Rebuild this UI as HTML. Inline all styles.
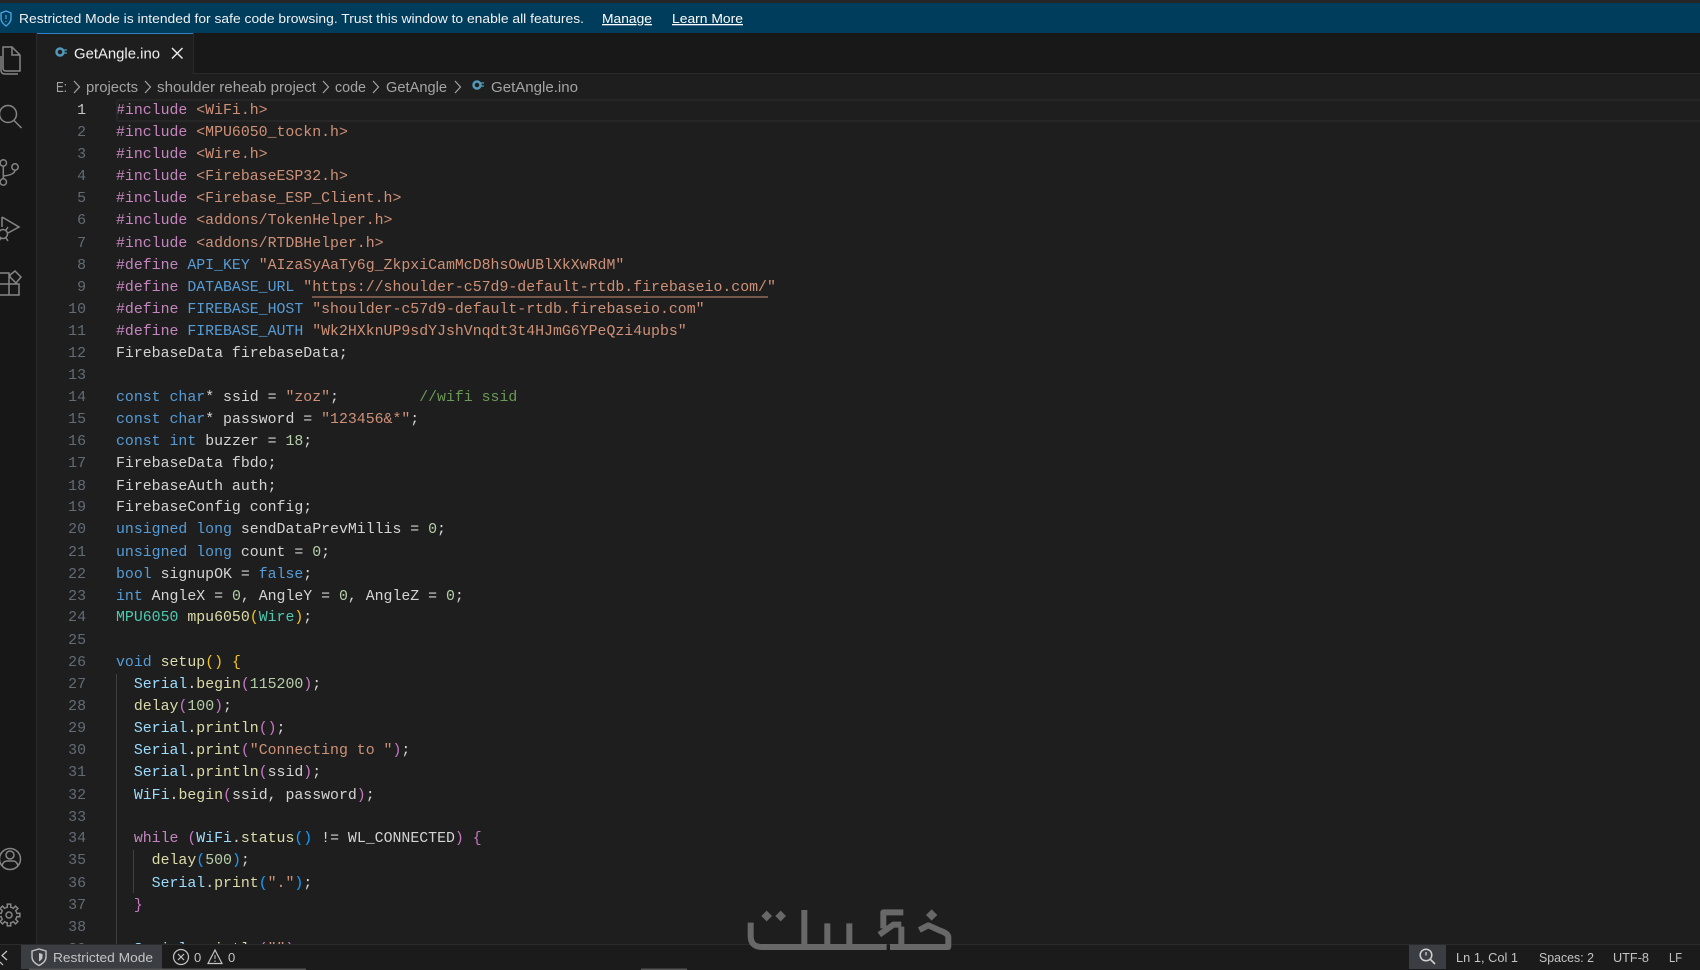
<!DOCTYPE html>
<html lang="en"><head><meta charset="utf-8"><title>GetAngle.ino</title>
<style>
html,body{margin:0;padding:0;width:1700px;height:970px;overflow:hidden;background:#1e1e1e}
#ed{position:absolute;left:0;top:97px;width:1700px;height:847px;overflow:hidden}
.l,.n{position:absolute;height:22px;line-height:22px;font:14.87px/22px "Liberation Mono",monospace;white-space:pre}
.l{left:116px;color:#d4d4d4}
.n{left:50px;width:36px;text-align:right;color:#626c76}
.p{color:#c586c0}.s{color:#ce9178}.b{color:#569cd6}.v{color:#9cdcfe}.f{color:#dcdcaa}.d{color:#b5cea8}.c{color:#6a9955}.t{color:#4ec9b0}.g{color:#f5c518}.m{color:#c678c6}.u{color:#179fff}
svg{position:absolute;left:0;top:0}
text{font-family:"Liberation Sans",sans-serif}
</style></head><body>
<div id="ed">
<div class="n" style="top:3px;color:#c6c6c6">1</div><div class="l" style="top:3px"><span class="p">#include</span> <span class="s">&lt;WiFi.h&gt;</span></div>
<div class="n" style="top:25px">2</div><div class="l" style="top:25px"><span class="p">#include</span> <span class="s">&lt;MPU6050_tockn.h&gt;</span></div>
<div class="n" style="top:47px">3</div><div class="l" style="top:47px"><span class="p">#include</span> <span class="s">&lt;Wire.h&gt;</span></div>
<div class="n" style="top:69px">4</div><div class="l" style="top:69px"><span class="p">#include</span> <span class="s">&lt;FirebaseESP32.h&gt;</span></div>
<div class="n" style="top:91px">5</div><div class="l" style="top:91px"><span class="p">#include</span> <span class="s">&lt;Firebase_ESP_Client.h&gt;</span></div>
<div class="n" style="top:113px">6</div><div class="l" style="top:113px"><span class="p">#include</span> <span class="s">&lt;addons/TokenHelper.h&gt;</span></div>
<div class="n" style="top:136px">7</div><div class="l" style="top:136px"><span class="p">#include</span> <span class="s">&lt;addons/RTDBHelper.h&gt;</span></div>
<div class="n" style="top:158px">8</div><div class="l" style="top:158px"><span class="p">#define</span> <span class="b">API_KEY</span> <span class="s">"AIzaSyAaTy6g_ZkpxiCamMcD8hsOwUBlXkXwRdM"</span></div>
<div class="n" style="top:180px">9</div><div class="l" style="top:180px"><span class="p">#define</span> <span class="b">DATABASE_URL</span> <span class="s">"https://shoulder-c57d9-default-rtdb.firebaseio.com/"</span></div>
<div class="n" style="top:202px">10</div><div class="l" style="top:202px"><span class="p">#define</span> <span class="b">FIREBASE_HOST</span> <span class="s">"shoulder-c57d9-default-rtdb.firebaseio.com"</span></div>
<div class="n" style="top:224px">11</div><div class="l" style="top:224px"><span class="p">#define</span> <span class="b">FIREBASE_AUTH</span> <span class="s">"Wk2HXknUP9sdYJshVnqdt3t4HJmG6YPeQzi4upbs"</span></div>
<div class="n" style="top:246px">12</div><div class="l" style="top:246px">FirebaseData firebaseData;</div>
<div class="n" style="top:268px">13</div>
<div class="n" style="top:290px">14</div><div class="l" style="top:290px"><span class="b">const</span> <span class="b">char</span>* ssid = <span class="s">"zoz"</span>;         <span class="c">//wifi ssid</span></div>
<div class="n" style="top:312px">15</div><div class="l" style="top:312px"><span class="b">const</span> <span class="b">char</span>* password = <span class="s">"123456&amp;*"</span>;</div>
<div class="n" style="top:334px">16</div><div class="l" style="top:334px"><span class="b">const</span> <span class="b">int</span> buzzer = <span class="d">18</span>;</div>
<div class="n" style="top:356px">17</div><div class="l" style="top:356px">FirebaseData fbdo;</div>
<div class="n" style="top:379px">18</div><div class="l" style="top:379px">FirebaseAuth auth;</div>
<div class="n" style="top:400px">19</div><div class="l" style="top:400px">FirebaseConfig config;</div>
<div class="n" style="top:422px">20</div><div class="l" style="top:422px"><span class="b">unsigned</span> <span class="b">long</span> sendDataPrevMillis = <span class="d">0</span>;</div>
<div class="n" style="top:445px">21</div><div class="l" style="top:445px"><span class="b">unsigned</span> <span class="b">long</span> count = <span class="d">0</span>;</div>
<div class="n" style="top:467px">22</div><div class="l" style="top:467px"><span class="b">bool</span> signupOK = <span class="b">false</span>;</div>
<div class="n" style="top:489px">23</div><div class="l" style="top:489px"><span class="b">int</span> AngleX = <span class="d">0</span>, AngleY = <span class="d">0</span>, AngleZ = <span class="d">0</span>;</div>
<div class="n" style="top:510px">24</div><div class="l" style="top:510px"><span class="t">MPU6050</span> <span class="f">mpu6050</span><span class="g">(</span><span class="t">Wire</span><span class="g">)</span>;</div>
<div class="n" style="top:533px">25</div>
<div class="n" style="top:555px">26</div><div class="l" style="top:555px"><span class="b">void</span> <span class="f">setup</span><span class="g">()</span> <span class="g">{</span></div>
<div class="n" style="top:577px">27</div><div class="l" style="top:577px">  <span class="v">Serial</span>.<span class="f">begin</span><span class="m">(</span><span class="d">115200</span><span class="m">)</span>;</div>
<div class="n" style="top:599px">28</div><div class="l" style="top:599px">  <span class="f">delay</span><span class="m">(</span><span class="d">100</span><span class="m">)</span>;</div>
<div class="n" style="top:621px">29</div><div class="l" style="top:621px">  <span class="v">Serial</span>.<span class="f">println</span><span class="m">()</span>;</div>
<div class="n" style="top:643px">30</div><div class="l" style="top:643px">  <span class="v">Serial</span>.<span class="f">print</span><span class="m">(</span><span class="s">"Connecting to "</span><span class="m">)</span>;</div>
<div class="n" style="top:665px">31</div><div class="l" style="top:665px">  <span class="v">Serial</span>.<span class="f">println</span><span class="m">(</span>ssid<span class="m">)</span>;</div>
<div class="n" style="top:688px">32</div><div class="l" style="top:688px">  <span class="v">WiFi</span>.<span class="f">begin</span><span class="m">(</span>ssid, password<span class="m">)</span>;</div>
<div class="n" style="top:710px">33</div>
<div class="n" style="top:731px">34</div><div class="l" style="top:731px">  <span class="p">while</span> <span class="m">(</span><span class="v">WiFi</span>.<span class="f">status</span><span class="u">()</span> != WL_CONNECTED<span class="m">)</span> <span class="m">{</span></div>
<div class="n" style="top:753px">35</div><div class="l" style="top:753px">    <span class="f">delay</span><span class="u">(</span><span class="d">500</span><span class="u">)</span>;</div>
<div class="n" style="top:776px">36</div><div class="l" style="top:776px">    <span class="v">Serial</span>.<span class="f">print</span><span class="u">(</span><span class="s">"."</span><span class="u">)</span>;</div>
<div class="n" style="top:798px">37</div><div class="l" style="top:798px">  <span class="m">}</span></div>
<div class="n" style="top:820px">38</div>
<div class="n" style="top:842px">39</div><div class="l" style="top:842px">  <span class="v">Serial</span>.<span class="f">println</span><span class="m">(</span><span class="s">""</span><span class="m">)</span>;</div>
</div>
<svg width="1700" height="970" viewBox="0 0 1700 970" fill="none">
<!-- banner -->
<rect x="0" y="0" width="1700" height="3" fill="#262626"/>
<rect x="0" y="3" width="1700" height="30" fill="#003c5c"/>
<path d="M1 13l5-2 5 2v5c0 4-2.500 6-5 8-2.500-2-5-4-5-8z" stroke="#4aa3df" stroke-width="1.400"/>
<path d="M6 15v4M6 21v1" stroke="#4aa3df" stroke-width="1.200"/>
<text x="19" y="23" font-size="13" fill="#f2f2f2" textLength="565" lengthAdjust="spacingAndGlyphs">Restricted Mode is intended for safe code browsing. Trust this window to enable all features.</text>
<text x="602" y="23" font-size="13" fill="#fff" textLength="50" lengthAdjust="spacingAndGlyphs" text-decoration="underline">Manage</text>
<text x="672" y="23" font-size="13" fill="#fff" textLength="71" lengthAdjust="spacingAndGlyphs" text-decoration="underline">Learn More</text>
<!-- tab bar -->
<rect x="37" y="33" width="1663" height="40" fill="#181818"/>
<rect x="37" y="73" width="1663" height="1" fill="#2a2a2a"/>
<rect x="37" y="33" width="156" height="41" fill="#1e1e1e"/>
<rect x="37" y="33" width="156" height="1" fill="#2f82c4"/>
<rect x="193" y="33" width="1" height="41" fill="#2a2a2a"/>
<circle cx="60" cy="52" r="3.500" stroke="#519aba" stroke-width="2.500"/>
<path d="M64 50h3M64 53h3" stroke="#519aba" stroke-width="1.200"/>
<text x="74" y="58.500" font-size="15" fill="#f0f0f0" textLength="86" lengthAdjust="spacingAndGlyphs">GetAngle.ino</text>
<path d="M172 48l10.500 10.500M182.500 48l-10.500 10.500" stroke="#e8e8e8" stroke-width="1.500"/>
<!-- breadcrumb -->
<g font-size="15" fill="#a4a4a4">
<text x="56" y="92" textLength="11" lengthAdjust="spacingAndGlyphs">E:</text>
<text x="86" y="92" textLength="52" lengthAdjust="spacingAndGlyphs">projects</text>
<text x="157" y="92" textLength="159" lengthAdjust="spacingAndGlyphs">shoulder reheab project</text>
<text x="335" y="92" textLength="31" lengthAdjust="spacingAndGlyphs">code</text>
<text x="386" y="92" textLength="61" lengthAdjust="spacingAndGlyphs">GetAngle</text>
<text x="491" y="92" textLength="87" lengthAdjust="spacingAndGlyphs">GetAngle.ino</text>
</g>
<g stroke="#a4a4a4" stroke-width="1.200">
<path d="M74 81l5.500 6-5.500 6M145 81l5.500 6-5.500 6M323 81l5.500 6-5.500 6M373 81l5.500 6-5.500 6M455 81l5.500 6-5.500 6"/>
</g>
<circle cx="477" cy="85" r="3.500" stroke="#519aba" stroke-width="2.500"/>
<path d="M481 83h3M481 86h3" stroke="#519aba" stroke-width="1.200"/>
<!-- current line -->
<path d="M117 100H1700M117 121H1700M117 100V121" stroke="#282828" stroke-width="1.500"/>
<path d="M312 297H768" stroke="#ce9178" stroke-width="1"/>
<!-- indent guides -->
<path d="M116.500 674V944M133.500 850V893" stroke="#404040" stroke-width="1"/>
<!-- activity bar -->
<rect x="0" y="33" width="36" height="911" fill="#171717"/>
<rect x="36" y="33" width="1" height="911" fill="#2a2a2a"/>
<g stroke="#858585" stroke-width="1.500">
<path d="M3 68V47H12L20 55V71H6Q3 71 3 68ZM12 47V55H20M1 56V70Q1 74 5 74H18"/>
<circle cx="8" cy="114" r="8.500"/><path d="M14 120.500L21.500 128"/>
<circle cx="3.300" cy="163" r="3.200"/><circle cx="15" cy="167" r="3.200"/><circle cx="3.300" cy="182" r="3.200"/>
<path d="M3.300 166V179M15 170.500Q14 175 3.300 176"/>
<path d="M2 217L19 227L8 233"/><circle cx="3" cy="234" r="4.500"/><path d="M2 217V227M8 227L6 230M-1 241L1 238M8 241L6 238"/>
<path d="M0 273H9V295M0 284H19V295H0M10 275L15 271L21 277L16 283L10 277Z"/>
<circle cx="10" cy="859" r="10.500"/><circle cx="10" cy="855" r="4"/><path d="M2 866Q3 861 7 861H13Q17 861 18 866"/>
<circle cx="9" cy="915" r="3"/>
<g transform="translate(9 915)">
<path d="M-3.060-7.390L-1.660-7.820L-1.720-10.870H1.720L1.660-7.820L3.060-7.390"/>
<path transform="rotate(45)" d="M-3.060-7.390L-1.660-7.820L-1.720-10.870H1.720L1.660-7.820L3.060-7.390"/>
<path transform="rotate(90)" d="M-3.060-7.390L-1.660-7.820L-1.720-10.870H1.720L1.660-7.820L3.060-7.390"/>
<path transform="rotate(135)" d="M-3.060-7.390L-1.660-7.820L-1.720-10.870H1.720L1.660-7.820L3.060-7.390"/>
<path transform="rotate(180)" d="M-3.060-7.390L-1.660-7.820L-1.720-10.870H1.720L1.660-7.820L3.060-7.390"/>
<path transform="rotate(225)" d="M-3.060-7.390L-1.660-7.820L-1.720-10.870H1.720L1.660-7.820L3.060-7.390"/>
<path transform="rotate(270)" d="M-3.060-7.390L-1.660-7.820L-1.720-10.870H1.720L1.660-7.820L3.060-7.390"/>
<path transform="rotate(315)" d="M-3.060-7.390L-1.660-7.820L-1.720-10.870H1.720L1.660-7.820L3.060-7.390"/>
</g>
</g>
<!-- status bar -->
<rect x="0" y="944" width="1700" height="26" fill="#1b1b1b"/>
<rect x="0" y="944" width="1700" height="1" fill="#2b2b2b"/>
<path d="M7 951l-5 4.500 5 4.500" stroke="#c8c8c8" stroke-width="1.200"/>
<path d="M0 962l3 3" stroke="#c8c8c8" stroke-width="1.200"/>
<rect x="21" y="945" width="141" height="24" fill="#3a3d41"/>
<path d="M32 951l7-2 7 2v6c0 4-3 6.500-7 8.500-4-2-7-4.500-7-8.500z" stroke="#c4c4c4" stroke-width="1.400"/>
<path d="M39 953l3.500 1v3c0 2-1.500 3-3.500 4.500z" fill="#c4c4c4"/>
<text x="53" y="962" font-size="13" fill="#c4c4c4" textLength="100" lengthAdjust="spacingAndGlyphs">Restricted Mode</text>
<circle cx="181" cy="957" r="7.500" stroke="#c4c4c4" stroke-width="1.200"/>
<path d="M178 954l6 6M184 954l-6 6" stroke="#c4c4c4" stroke-width="1.200"/>
<text x="194" y="962" font-size="13" fill="#c4c4c4">0</text>
<path d="M215 950l7 13.500h-14z" stroke="#c4c4c4" stroke-width="1.200"/>
<path d="M215 955v4M215 960.500v1.500" stroke="#c4c4c4" stroke-width="1"/>
<text x="228" y="962" font-size="13" fill="#c4c4c4">0</text>
<rect x="1409" y="945" width="37" height="24" fill="#3a3d41"/>
<circle cx="1426" cy="955" r="5.800" stroke="#d0d0d0" stroke-width="1.500"/>
<path d="M1430.500 959.500l4.500 4.500" stroke="#d0d0d0" stroke-width="1.600"/>
<path d="M1426 952v3.500" stroke="#d0d0d0" stroke-width="1.300"/>
<g font-size="13" fill="#c4c4c4">
<text x="1456" y="962" textLength="62" lengthAdjust="spacingAndGlyphs">Ln 1, Col 1</text>
<text x="1539" y="962" textLength="55" lengthAdjust="spacingAndGlyphs">Spaces: 2</text>
<text x="1613" y="962" textLength="36" lengthAdjust="spacingAndGlyphs">UTF-8</text>
<text x="1669" y="962" textLength="13" lengthAdjust="spacingAndGlyphs">LF</text>
</g>
<rect x="29" y="968.500" width="277" height="1.500" fill="#555"/>
<rect x="641" y="968.500" width="46" height="1.500" fill="#555"/>
<!-- watermark logo, drawn above the status bar -->
<g transform="translate(740 900) scale(0.3333)" stroke="#686868" stroke-width="18" stroke-linejoin="round">
<path d="M32 68V108Q32 141 66 141H440M193 30V141M262 70V141M328 70V141"/>
<path d="M490 37H430V85M418 104L460 74H484M484 80V141H450"/>
<path d="M484 141H625V112Q625 100 600 92L565 76L538 90"/>
<path d="M80 32L96 48L80 64L64 48ZM122 32L138 48L122 64L106 48ZM575 28L592 45L575 62L558 45Z" fill="#686868" stroke="none"/>
</g>
</svg>
</body></html>
